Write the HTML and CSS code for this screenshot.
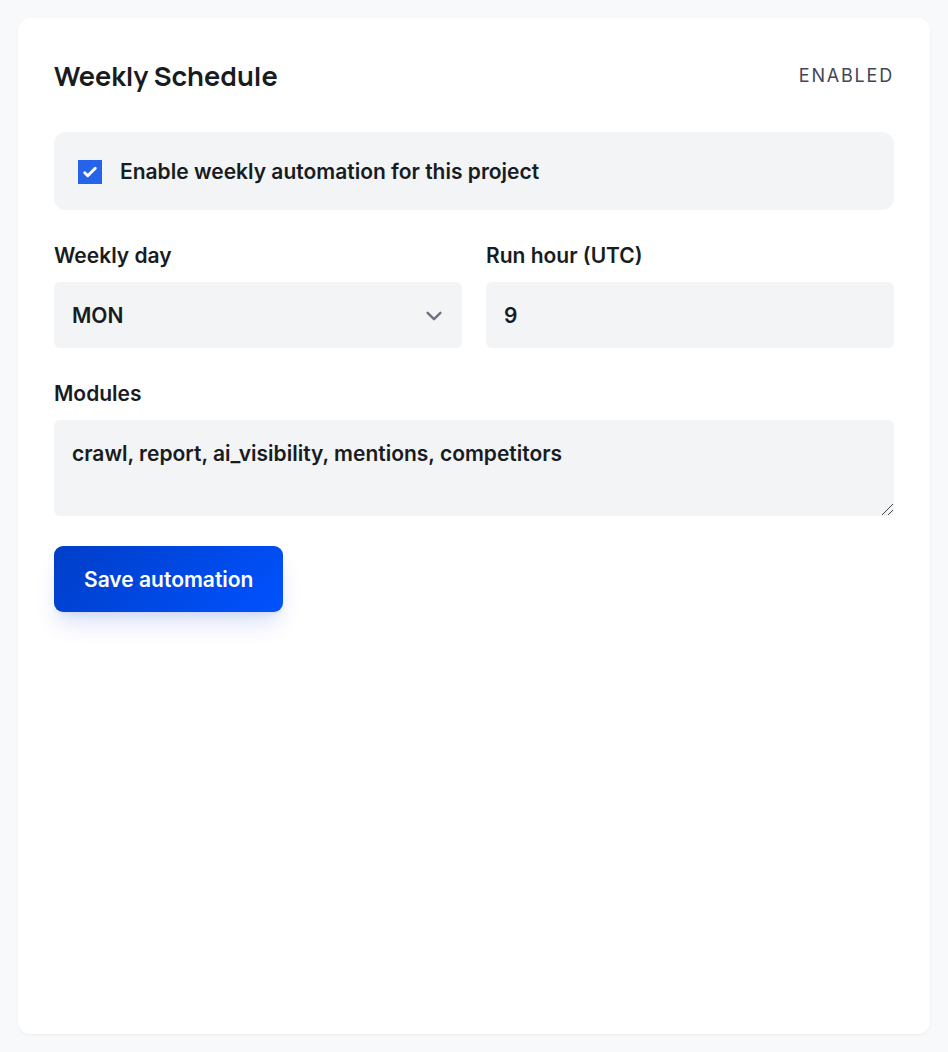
FILE: index.html
```html
<!DOCTYPE html>
<html lang="en">
<head>
  <meta charset="UTF-8">
  <meta name="viewport" content="width=device-width, initial-scale=1.0">
  <title>Weekly Schedule</title>
  <link rel="stylesheet" href="styles.css">
</head>
<body>
  <section class="card">
    <div class="card-header">
      <h2>Weekly Schedule</h2>
      <span class="status">Enabled</span>
    </div>
    <form class="schedule-form">
      <label class="toggle" for="enabled">
        <input type="checkbox" id="enabled" checked>
        <span>Enable weekly automation for this project</span>
      </label>
      <div class="row">
        <div class="field">
          <label for="weeklyDay">Weekly day</label>
          <select id="weeklyDay">
            <option selected>MON</option>
            <option>TUE</option>
            <option>WED</option>
            <option>THU</option>
            <option>FRI</option>
            <option>SAT</option>
            <option>SUN</option>
          </select>
        </div>
        <div class="field">
          <label for="runHour">Run hour (UTC)</label>
          <input type="number" id="runHour" min="0" max="23" value="9">
        </div>
      </div>
      <div class="field">
        <label for="modules">Modules</label>
        <textarea id="modules" rows="2">crawl, report, ai_visibility, mentions, competitors</textarea>
      </div>
      <button type="submit">Save automation</button>
    </form>
  </section>
</body>
</html>
```

FILE: styles.css
```css
* {
  box-sizing: border-box;
}
body {
  margin: 0;
  padding: 18px;
  font-family: Inter, sans-serif;
  font-size: 21px;
  line-height: 31px;
  font-weight: 600;
  color: #191c1e;
  background: #f8f9fb;
}
.card {
  min-height: calc(100vh - 36px);
  padding: 36px;
  background: #fff;
  border-radius: 12px;
  box-shadow: 0 1px 3px rgba(0, 0, 0, 0.05);
}
.card-header {
  display: flex;
  align-items: center;
  justify-content: space-between;
  margin-bottom: 35px;
}
h2 {
  margin: 0;
  font-family: Manrope, Inter, sans-serif;
  font-size: 27px;
  line-height: 43px;
  font-weight: 700;
}
.status {
  font-size: 18px;
  font-weight: 400;
  letter-spacing: 0.1em;
  text-transform: uppercase;
  color: #434656;
}
.schedule-form {
  display: flex;
  flex-direction: column;
  gap: 30px;
}
.toggle {
  display: flex;
  align-items: center;
  gap: 18px;
  padding: 24px 24px 23px;
  background: #f2f4f6;
  border-radius: 12px;
}
.toggle input {
  appearance: none;
  flex: none;
  width: 24px;
  height: 24px;
  margin: 0;
  background: #fff;
  border: 1px solid #6b7280;
}
.toggle input:checked {
  border: none;
  background: #2563eb url("data:image/svg+xml,%3Csvg xmlns='http://www.w3.org/2000/svg' viewBox='0 0 16 16' fill='white'%3E%3Cpath d='M12.207 4.793a1 1 0 010 1.414l-5 5a1 1 0 01-1.414 0l-2-2a1 1 0 011.414-1.414L6.5 9.086l4.293-4.293a1 1 0 011.414 0z'/%3E%3C/svg%3E") center / 100% no-repeat;
}
.row {
  display: grid;
  grid-template-columns: 1fr 1fr;
  gap: 24px;
}
.field {
  display: flex;
  flex-direction: column;
  gap: 11px;
}
.field input,
.field select,
.field textarea {
  display: block;
  width: 100%;
  padding: 18px 18px 17px;
  font: inherit;
  color: inherit;
  background-color: #f2f4f6;
  border: none;
  border-radius: 6px;
}
.field select {
  appearance: none;
  padding-right: 60px;
  background-image: url("data:image/svg+xml,%3Csvg xmlns='http://www.w3.org/2000/svg' fill='none' viewBox='0 0 20 20'%3E%3Cpath stroke='%236b7280' stroke-linecap='round' stroke-linejoin='round' stroke-width='1.5' d='M6 8l4 4 4-4'/%3E%3C/svg%3E");
  background-position: right 12px top 18px;
  background-size: 32px;
  background-repeat: no-repeat;
}
.field textarea {
  padding-bottom: 16px;
  resize: vertical;
}
.field textarea::-webkit-resizer {
  background: url("data:image/svg+xml,%3Csvg xmlns='http://www.w3.org/2000/svg' viewBox='0 0 15 15' fill='none' stroke='%23444'%3E%3Cpath d='M3 14L14 3M9 14L14 9'/%3E%3C/svg%3E") center / 100% no-repeat;
}
button {
  align-self: flex-start;
  padding: 18px 30px 17px;
  font: inherit;
  color: #fff;
  background: linear-gradient(135deg, #003ec7, #0052ff);
  border: none;
  border-radius: 9px;
  box-shadow: 0 15px 22px -4px rgba(0, 62, 199, 0.15), 0 6px 9px -6px rgba(0, 62, 199, 0.15);
  cursor: pointer;
}
```
